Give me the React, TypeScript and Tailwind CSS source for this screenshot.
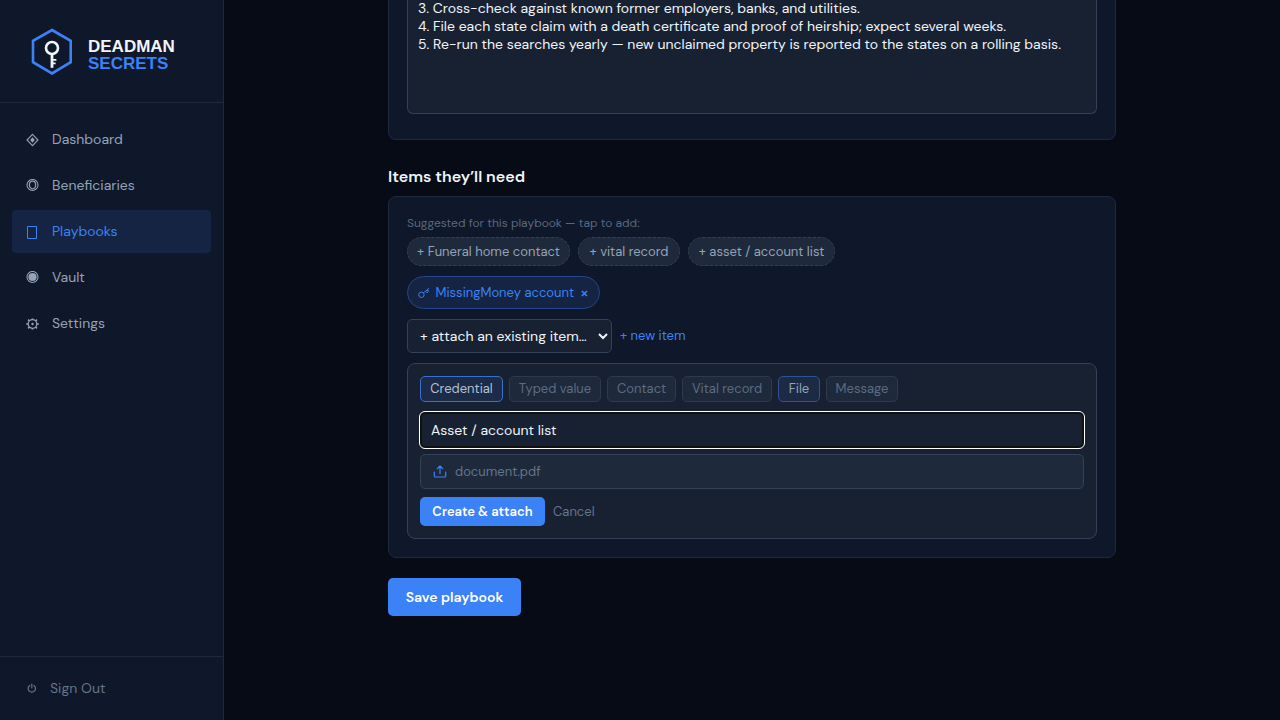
import { useState } from 'react';
import { clsx } from 'clsx';

const navItems = ['Dashboard', 'Beneficiaries', 'Playbooks', 'Vault', 'Settings'];

const suggestions = [
  { label: 'Funeral home contact', width: 'w-[163px]' },
  { label: 'vital record', width: 'w-[102px]' },
  { label: 'asset / account list', width: 'w-[147px]' },
];

const itemTypes = [
  { label: 'Credential', width: 'w-[83px]', style: 'border-[#3b6fd0] bg-[#1c2b48] text-[#b6c0d0]' },
  { label: 'Typed value', width: 'w-[92px]', style: 'border-[#2d3a4e] bg-[#1e293b] text-[#5d6b81]' },
  { label: 'Contact', width: 'w-[69px]', style: 'border-[#2d3a4e] bg-[#1e293b] text-[#5d6b81]' },
  { label: 'Vital record', width: 'w-[90px]', style: 'border-[#2d3a4e] bg-[#1e293b] text-[#5d6b81]' },
  { label: 'File', width: 'w-[42px]', style: 'border-[#2f5291] bg-[#1d2a45] text-[#94a3b8]' },
  { label: 'Message', width: 'w-[72px]', style: 'border-[#2d3a4e] bg-[#1e293b] text-[#5d6b81]' },
];

const initialSteps = [
  '3. Cross-check against known former employers, banks, and utilities.',
  '4. File each state claim with a death certificate and proof of heirship; expect several weeks.',
  '5. Re-run the searches yearly — new unclaimed property is reported to the states on a rolling basis.',
].join('\n');

const Logo = () => (
  <svg width="48" height="50" viewBox="0 0 48 50" fill="none" aria-hidden="true">
    <path d="M24 4 42.7 14.8V36.2L24 47.4 5 36.2V14.8Z" stroke="#3b82f6" strokeWidth="2.6" />
    <circle cx="24" cy="22" r="6" stroke="#f1f5f9" strokeWidth="2.6" />
    <path d="M24 28V41.8" stroke="#f1f5f9" strokeWidth="2.8" />
    <path d="M25 33.8h3.4M25 37.4h2.6" stroke="#f1f5f9" strokeWidth="1.8" />
  </svg>
);

const NavIcon = ({ name }: { name: string }) => (
  <svg width="14" height="14" viewBox="0 0 14 14" fill="none" stroke="currentColor" className="shrink-0" aria-hidden="true">
    {name === 'Dashboard' && (
      <>
        <path d="M6.5 1.4 12 7 6.5 12.6 1 7Z" strokeWidth="1.1" />
        <path d="M6.5 4.2 8.9 7 6.5 9.8 4.1 7Z" fill="currentColor" stroke="none" />
      </>
    )}
    {name === 'Beneficiaries' && (
      <>
        <circle cx="6.5" cy="6" r="5.5" strokeWidth="1.1" />
        <ellipse cx="6.5" cy="6" rx="3.1" ry="3.8" strokeWidth="1.2" />
      </>
    )}
    {name === 'Playbooks' && <path d="M1.5 1.5h9v12h-9Z" />}
    {name === 'Vault' && (
      <>
        <circle cx="6.5" cy="6" r="5.5" strokeWidth="1.1" />
        <circle cx="6.5" cy="6" r="4.1" fill="currentColor" stroke="none" />
      </>
    )}
    {name === 'Settings' && (
      <>
        <circle cx="6.5" cy="7" r="4.3" strokeWidth="1.2" />
        <circle cx="6.5" cy="7" r="1.2" fill="currentColor" stroke="none" />
        <path
          d="M10.8 7h2M.2 7h2M9.5 4l1.4-1.4M3.5 4 2.1 2.6M9.5 10l1.4 1.4M3.5 10l-1.4 1.4M6.5 2.7V1.5M6.5 11.3v1.2"
          strokeWidth="1.7"
        />
      </>
    )}
  </svg>
);

const PowerIcon = () => (
  <svg width="12" height="12" viewBox="0 0 12 12" fill="none" stroke="currentColor" strokeLinecap="round" aria-hidden="true">
    <path d="M3.7 2.4a3.7 3.7 0 1 0 4.2 0M5.8 1v4" strokeWidth="1.2" />
  </svg>
);

const KeyIcon = () => (
  <svg width="12" height="12" viewBox="0 0 12 12" fill="none" stroke="currentColor" aria-hidden="true">
    <circle cx="3.6" cy="7.9" r="2.8" />
    <path d="M5.7 5.9 11.4 1M7.8 4.1l1.5 1.7 1.4-1.2-1.4-1.6M9.8 2.6l1.2 1.3" />
  </svg>
);

const UploadIcon = () => (
  <svg width="14" height="14" viewBox="0 0 14 14" fill="none" stroke="#3b82f6" strokeWidth="1.2" aria-hidden="true">
    <path d="M7 8.5V1M4.2 3.7 7 1l2.8 2.7M1.3 7v3.7q0 1.3 1.3 1.3h8.8q1.3 0 1.3-1.3V7" strokeLinecap="round" strokeLinejoin="round" />
  </svg>
);

const Sidebar = () => (
  <aside className="flex w-56 shrink-0 flex-col border-r border-[#1e293b] bg-[#0f172a]">
    <div className="flex h-[103px] items-center gap-3 border-b border-[#1e293b] px-7">
      <Logo />
      <div className="pt-2 font-['Liberation_Sans',sans-serif] text-[17px] leading-[17px] font-bold text-slate-100">
        <div>DEADMAN</div>
        <div className="text-[#3b82f6]">SECRETS</div>
      </div>
    </div>
    <nav className="flex flex-1 flex-col gap-[3px] px-3 pt-[15px]">
      {navItems.map((label) => (
        <a
          key={label}
          href="#"
          className={clsx(
            'flex h-[43px] items-center gap-3 rounded px-3.5 text-[14px]',
            label === 'Playbooks' ? 'bg-[#152442] text-[#3b82f6]' : 'text-[#94a3b8]',
          )}
        >
          <NavIcon name={label} />
          {label}
        </a>
      ))}
    </nav>
    <div className="border-t border-[#1e293b] px-3 py-3">
      <button className="flex h-[39px] w-full items-center gap-3 px-3.5 text-[14px] text-[#64748b]">
        <PowerIcon />
        Sign Out
      </button>
    </div>
  </aside>
);

const NewItemForm = () => {
  const [title, setTitle] = useState('Asset / account list');

  return (
    <div className="rounded-lg border border-[#334155] bg-[#182131] p-3">
      <div className="mb-2.5 flex flex-wrap gap-1.5">
        {itemTypes.map((type) => (
          <button
            key={type.label}
            className={clsx('h-[26px] rounded-[5px] border text-[13px] whitespace-nowrap', type.width, type.style)}
          >
            {type.label}
          </button>
        ))}
      </div>
      <input
        aria-label="Item title"
        value={title}
        onChange={(e) => setTitle(e.target.value)}
        className="block h-9 w-full rounded-[5px] border-2 border-[#101010] bg-[#182131] px-[9px] text-[14px] text-slate-100 outline-1 outline-white"
      />
      <button className="mt-1.5 flex h-[35px] w-full items-center gap-2 rounded-[5px] border border-[#334155] bg-[#1e293b] px-3 text-[13px] text-[#64748b]">
        <UploadIcon />
        document.pdf
      </button>
      <div className="mt-2 flex items-center gap-2 text-[13px]">
        <button className="h-[29px] w-[125px] rounded-[5px] bg-[#3b82f6] font-semibold text-white">Create &amp; attach</button>
        <button className="text-[#64748b]">Cancel</button>
      </div>
    </div>
  );
};

const App = () => {
  const [steps, setSteps] = useState(initialSteps);

  return (
    <div className="flex min-h-screen bg-[#070b16] font-['DM_Sans','Inter',sans-serif] text-slate-100">
      <Sidebar />
      <main className="min-w-0 flex-1">
        <div className="mx-auto -mt-px max-w-[728px]">
          <section className="rounded-b-lg border border-t-0 border-[#1e293b] bg-[#0f172a] px-[18px] pb-[25px]">
            <textarea
              aria-label="Steps"
              value={steps}
              onChange={(e) => setSteps(e.target.value)}
              className="block h-[115px] w-full resize-none overflow-hidden rounded-b-md border border-t-0 border-[#334155] bg-[#182131] px-2.5 text-[14px] leading-[18px] text-slate-100 outline-none"
            />
          </section>

          <h2 className="mt-[25px] mb-[7px] text-[16px] leading-6 font-semibold">Items they’ll need</h2>

          <section className="flex flex-col gap-2.5 rounded-lg border border-[#1e293b] bg-[#0f172a] px-[18px] pt-[17px] pb-[18px]">
            <div>
              <p className="mb-[5px] text-[12px] leading-[18px] text-[#5a687d]">Suggested for this playbook — tap to add:</p>
              <div className="flex flex-wrap gap-2">
                {suggestions.map((item) => (
                  <button
                    key={item.label}
                    className={clsx(
                      'h-[29px] rounded-full border border-dashed border-[#334155] bg-[#1e293b] text-[13px] whitespace-nowrap text-[#94a3b8]',
                      item.width,
                    )}
                  >
                    + {item.label}
                  </button>
                ))}
              </div>
            </div>

            <div className="flex">
              <span className="flex h-[33px] w-[193px] items-center gap-1.5 rounded-full border border-[#24468a] bg-[#152442] px-2.5 text-[13px] whitespace-nowrap text-[#3b82f6]">
                <KeyIcon />
                MissingMoney account
                <button aria-label="Remove MissingMoney account" className="ml-auto text-[16px] font-medium">
                  ×
                </button>
              </span>
            </div>

            <div className="flex items-center gap-2">
              <select
                aria-label="Attach an existing item"
                className="h-[34px] w-[205px] rounded-[5px] border border-[#334155] bg-[#182131] px-2 text-[14px] text-slate-100"
              >
                <option>+ attach an existing item…</option>
              </select>
              <button className="text-[13px] text-[#3b82f6]">+ new item</button>
            </div>

            <NewItemForm />
          </section>

          <button className="mt-5 h-[38px] w-[133px] rounded-[5px] bg-[#3b82f6] text-[14px] font-semibold text-white">
            Save playbook
          </button>
        </div>
      </main>
    </div>
  );
};

export default App;
